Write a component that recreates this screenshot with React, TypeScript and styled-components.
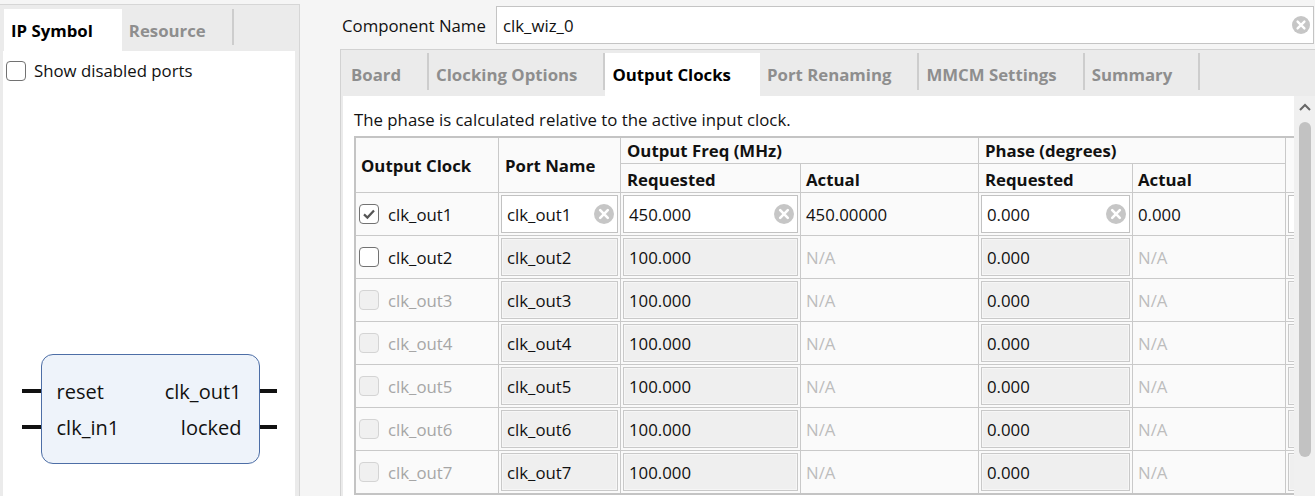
import { Fragment } from "react";
import styled, { createGlobalStyle } from "styled-components";

const GlobalStyle = createGlobalStyle`
  html, body {
    margin: 0;
    padding: 0;
  }
  body {
    background: #f5f5f5;
    font-family: "Open Sans", "Noto Sans", sans-serif;
    font-size: 16.8px;
    color: #111;
    overflow: hidden;
  }
  * {
    box-sizing: border-box;
  }
`;

interface IClockRow {
    name: string;
    enabled: boolean;
    checked: boolean;
    editable: boolean;
    freq: string;
    actual: string;
    phase: string;
    phaseActual: string;
}

const clockRows: IClockRow[] = [
    { name: "clk_out1", enabled: true, checked: true, editable: true, freq: "450.000", actual: "450.00000", phase: "0.000", phaseActual: "0.000" },
    { name: "clk_out2", enabled: true, checked: false, editable: false, freq: "100.000", actual: "N/A", phase: "0.000", phaseActual: "N/A" },
    { name: "clk_out3", enabled: false, checked: false, editable: false, freq: "100.000", actual: "N/A", phase: "0.000", phaseActual: "N/A" },
    { name: "clk_out4", enabled: false, checked: false, editable: false, freq: "100.000", actual: "N/A", phase: "0.000", phaseActual: "N/A" },
    { name: "clk_out5", enabled: false, checked: false, editable: false, freq: "100.000", actual: "N/A", phase: "0.000", phaseActual: "N/A" },
    { name: "clk_out6", enabled: false, checked: false, editable: false, freq: "100.000", actual: "N/A", phase: "0.000", phaseActual: "N/A" },
    { name: "clk_out7", enabled: false, checked: false, editable: false, freq: "100.000", actual: "N/A", phase: "0.000", phaseActual: "N/A" },
];

const wizardTabs = ["Board", "Clocking Options", "Output Clocks", "Port Renaming", "MMCM Settings", "Summary"];

const Window = styled.div`
    display: flex;
    width: 1315px;
    height: 496px;
    overflow: hidden;
`;

/* ---------- left: IP symbol ---------- */

const LeftPanel = styled.div`
    width: 300px;
    flex: none;
    margin-top: 4px;
    display: flex;
    flex-direction: column;
    background: #ebebeb;
    border-top: 1px solid #d6d6d6;
    border-right: 1px solid #d6d6d6;
    padding: 0 4px 0 3px;
`;

const TabBar = styled.div<{ $height: number; $top: number }>`
    height: ${(props) => props.$height}px;
    flex: none;
    display: flex;
    align-items: stretch;
    padding-top: ${(props) => props.$top}px;
    padding-left: 1px;
`;

const Tab = styled.div<{ $active?: boolean }>`
    display: flex;
    align-items: center;
    padding: ${(props) => (props.$active ? "0 29px 0 7px" : "6px 26px 0 7px")};
    margin-bottom: ${(props) => (props.$active ? "0" : "6px")};
    background: ${(props) => (props.$active ? "#ffffff" : "transparent")};
    border-right: ${(props) => (props.$active ? "none" : "2px solid #cdcdcd")};
    font-weight: 700;
    color: ${(props) => (props.$active ? "#000" : "#8e8e8e")};
    white-space: nowrap;
`;

const LeftContent = styled.div`
    flex: 1;
    background: #ffffff;
    display: flex;
    flex-direction: column;
`;

const CheckRow = styled.label`
    display: flex;
    align-items: center;
    gap: 8px;
    padding: 8px 3px;
`;

const Box = styled.span<{ $disabled?: boolean }>`
    width: 20px;
    height: 20px;
    flex: none;
    display: flex;
    align-items: center;
    justify-content: center;
    border-radius: 4px;
    border: 1.5px solid ${(props) => (props.$disabled ? "#d4d4d4" : "#727272")};
    background: ${(props) => (props.$disabled ? "#f0f0f0" : "#ffffff")};
`;

const Symbol = styled.div`
    margin-top: auto;
    margin-bottom: 32px;
    align-self: center;
    display: flex;
`;

const PinColumn = styled.div`
    display: flex;
    flex-direction: column;
    gap: 32px;
    padding-top: 35px;
`;

const Pin = styled.div<{ $length: number }>`
    width: ${(props) => props.$length}px;
    height: 4px;
    background: #111;
`;

const SymbolBox = styled.div`
    width: 219px;
    height: 110px;
    border: 1px solid #4d6ea6;
    border-radius: 12px;
    background: #eef3fa;
    display: grid;
    grid-template-columns: 1fr 1fr;
    grid-auto-rows: 36px;
    padding: 18px 17px 0 15px;
    font-size: 20px;
`;

const PortName = styled.div<{ $right?: boolean }>`
    display: flex;
    align-items: center;
    justify-content: ${(props) => (props.$right ? "flex-end" : "flex-start")};
`;

/* ---------- right: wizard ---------- */

const RightPane = styled.div`
    flex: 1;
    min-width: 0;
    display: flex;
    flex-direction: column;
    padding-left: 40px;
`;

const NameRow = styled.div`
    display: flex;
    align-items: center;
    margin-top: 6px;
    height: 38px;
    padding-left: 2px;
`;

const NameLabel = styled.div`
    width: 154px;
    flex: none;
`;

const NameField = styled.div`
    flex: 1;
    height: 38px;
    margin-right: 1px;
    display: flex;
    align-items: center;
    justify-content: space-between;
    padding: 0 3px 0 6px;
    background: #ffffff;
    border: 1px solid #c4c4c4;
`;

const TabPanel = styled.div`
    flex: 1;
    min-height: 0;
    margin-top: 5px;
    display: flex;
    flex-direction: column;
    background: #ebebeb;
    border-top: 1px solid #d2d2d2;
    border-left: 1px solid #d2d2d2;
    padding: 3px 0 0 2px;
`;

const Content = styled.div`
    flex: 1;
    min-height: 0;
    display: flex;
    background: #ffffff;
`;

const ScrollArea = styled.div`
    flex: 1;
    min-width: 0;
    overflow: hidden;
    padding: 13px 0 0 11px;
`;

const Description = styled.div`
    line-height: 22px;
    margin-bottom: 5px;
`;

const Grid = styled.div`
    display: grid;
    width: 944px;
    grid-template-columns: 142px 121px 179px 177px 153px 152px 20px;
    grid-template-rows: 25px 28px repeat(7, 42px);
    gap: 1px;
    background: #c9c9c9;
    border: 2px solid #c4c4c4;
    border-right: none;
`;

const Cell = styled.div<{ $rows?: number; $cols?: number; $pad?: number; $top?: number }>`
    grid-row: span ${(props) => props.$rows ?? 1};
    grid-column: span ${(props) => props.$cols ?? 1};
    background: #fafafa;
    display: flex;
    align-items: center;
    gap: 9px;
    padding-left: ${(props) => props.$pad ?? 5}px;
    padding-top: ${(props) => props.$top ?? 0}px;
    white-space: nowrap;
    overflow: hidden;
`;

const HeadCell = styled(Cell)`
    font-weight: 700;
`;

const Muted = styled.span<{ $tone: "disabled" | "na" | "normal" }>`
    color: ${(props) => (props.$tone === "disabled" ? "#a6a6a6" : props.$tone === "na" ? "#bdbdbd" : "#111")};
`;

const Field = styled.div<{ $editable: boolean }>`
    flex: 1;
    align-self: stretch;
    margin: 2px;
    display: flex;
    align-items: center;
    justify-content: space-between;
    padding: 0 3px 0 5px;
    background: ${(props) => (props.$editable ? "#ffffff" : "#efefef")};
    border: 1px solid ${(props) => (props.$editable ? "#c2c2c2" : "#c9c9c9")};
    box-shadow: inset 0 0 0 1px ${(props) => (props.$editable ? "#ffffff" : "#f6f6f6")};
`;

const Scrollbar = styled.div`
    width: 21px;
    flex: none;
    display: flex;
    flex-direction: column;
    align-items: center;
    background: #f0f0f0;
`;

const ScrollArrow = styled.div`
    height: 22px;
    display: flex;
    align-items: center;
`;

const Thumb = styled.div`
    width: 12px;
    height: 335px;
    margin-top: 4px;
    border-radius: 6px;
    background: #c2c2c2;
`;

function ClearIcon({ size }: { size: number }) {
    return (
        <svg width={size} height={size} viewBox="0 0 20 20">
            <circle cx="10" cy="10" r="10" fill="#c6c6c6" />
            <path d="M6.2 6.2 L13.8 13.8 M13.8 6.2 L6.2 13.8" stroke="#fff" strokeWidth="2.6" strokeLinecap="round" />
        </svg>
    );
}

function CheckBox({ checked, disabled }: { checked?: boolean; disabled?: boolean }) {
    return (
        <Box $disabled={disabled}>
            {checked && (
                <svg width="14" height="14" viewBox="0 0 14 14">
                    <path d="M2 7.4 L5.4 10.6 L12 3.4" fill="none" stroke="#555" strokeWidth="2.2" />
                </svg>
            )}
        </Box>
    );
}

function InputCell({ value, editable }: { value: string; editable: boolean }) {
    return (
        <Cell $pad={0}>
            <Field $editable={editable}>
                <span>{value}</span>
                {editable && value && <ClearIcon size={20} />}
            </Field>
        </Cell>
    );
}

function ClockTable() {
    return (
        <Grid>
            <HeadCell $rows={2}>Output Clock</HeadCell>
            <HeadCell $rows={2} $pad={6}>Port Name</HeadCell>
            <HeadCell $cols={2} $pad={6}>Output Freq (MHz)</HeadCell>
            <HeadCell $cols={2} $pad={6}>Phase (degrees)</HeadCell>
            <HeadCell $rows={2} />
            <HeadCell $pad={6} $top={3}>Requested</HeadCell>
            <HeadCell $pad={5} $top={3}>Actual</HeadCell>
            <HeadCell $pad={6} $top={3}>Requested</HeadCell>
            <HeadCell $pad={5} $top={3}>Actual</HeadCell>
            {clockRows.map((row) => (
                <Fragment key={row.name}>
                    <Cell $pad={3}>
                        <CheckBox checked={row.checked} disabled={!row.enabled} />
                        <Muted $tone={row.enabled ? "normal" : "disabled"}>{row.name}</Muted>
                    </Cell>
                    <InputCell value={row.name} editable={row.editable} />
                    <InputCell value={row.freq} editable={row.editable} />
                    <Cell>
                        <Muted $tone={row.actual === "N/A" ? "na" : "normal"}>{row.actual}</Muted>
                    </Cell>
                    <InputCell value={row.phase} editable={row.editable} />
                    <Cell>
                        <Muted $tone={row.phaseActual === "N/A" ? "na" : "normal"}>{row.phaseActual}</Muted>
                    </Cell>
                    <InputCell value="" editable={row.editable} />
                </Fragment>
            ))}
        </Grid>
    );
}

export default function App() {
    return (
        <>
            <GlobalStyle />
            <Window>
                <LeftPanel>
                    <TabBar $height={46} $top={4}>
                        <Tab $active>IP Symbol</Tab>
                        <Tab>Resource</Tab>
                    </TabBar>
                    <LeftContent>
                        <CheckRow>
                            <CheckBox />
                            Show disabled ports
                        </CheckRow>
                        <Symbol>
                            <PinColumn>
                                <Pin $length={19} />
                                <Pin $length={19} />
                            </PinColumn>
                            <SymbolBox>
                                <PortName>reset</PortName>
                                <PortName $right>clk_out1</PortName>
                                <PortName>clk_in1</PortName>
                                <PortName $right>locked</PortName>
                            </SymbolBox>
                            <PinColumn>
                                <Pin $length={17} />
                                <Pin $length={17} />
                            </PinColumn>
                        </Symbol>
                    </LeftContent>
                </LeftPanel>

                <RightPane>
                    <NameRow>
                        <NameLabel>Component Name</NameLabel>
                        <NameField>
                            <span>clk_wiz_0</span>
                            <ClearIcon size={18} />
                        </NameField>
                    </NameRow>
                    <TabPanel>
                        <TabBar $height={43} $top={0}>
                            {wizardTabs.map((name) => (
                                <Tab key={name} $active={name === "Output Clocks"}>
                                    {name}
                                </Tab>
                            ))}
                        </TabBar>
                        <Content>
                            <ScrollArea>
                                <Description>The phase is calculated relative to the active input clock.</Description>
                                <ClockTable />
                            </ScrollArea>
                            <Scrollbar>
                                <ScrollArrow>
                                    <svg width="12" height="8" viewBox="0 0 12 8">
                                        <path d="M1 7 L6 2 L11 7" fill="none" stroke="#666" strokeWidth="2" />
                                    </svg>
                                </ScrollArrow>
                                <Thumb />
                            </Scrollbar>
                        </Content>
                    </TabPanel>
                </RightPane>
            </Window>
        </>
    );
}
